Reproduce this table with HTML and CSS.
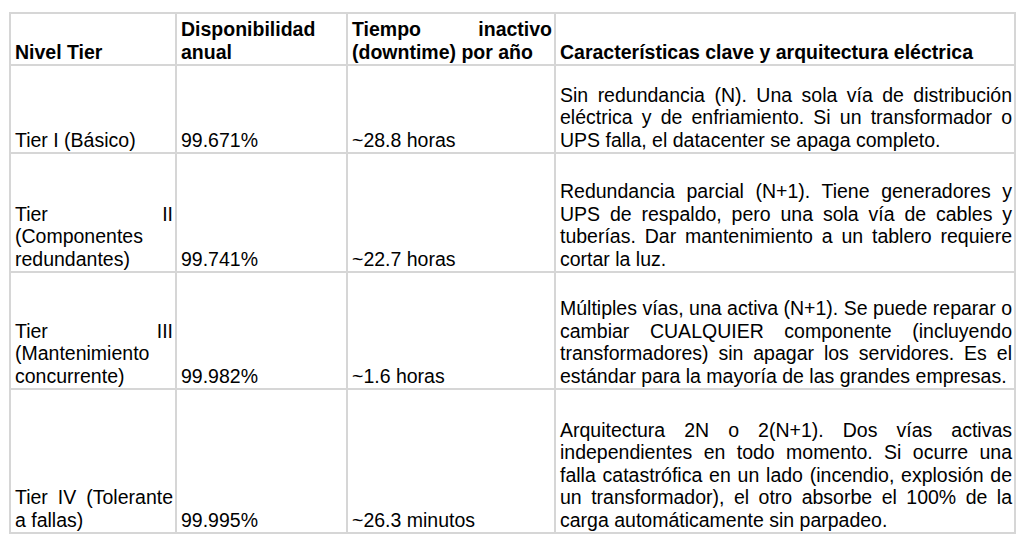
FILE: index.html
```html
<!DOCTYPE html>
<html lang="es">
<head>
<meta charset="utf-8">
<title>Niveles Tier</title>
<link rel="stylesheet" href="styles.css">
</head>
<body>
<table class="tiers">
  <colgroup>
    <col class="c1"><col class="c2"><col class="c3"><col class="c4">
  </colgroup>
  <thead>
    <tr class="r-head">
      <th>Nivel Tier</th>
      <th>Disponibilidad anual</th>
      <th>Tiempo inactivo (downtime) por año</th>
      <th>Características clave y arquitectura eléctrica</th>
    </tr>
  </thead>
  <tbody>
    <tr class="r1">
      <td>Tier I (Básico)</td>
      <td>99.671%</td>
      <td>~28.8 horas</td>
      <td>Sin redundancia (N). Una sola vía de distribución eléctrica y de enfriamiento. Si un transformador o UPS falla, el datacenter se apaga completo.</td>
    </tr>
    <tr class="r2">
      <td>Tier II (Componentes redundantes)</td>
      <td>99.741%</td>
      <td>~22.7 horas</td>
      <td>Redundancia parcial (N+1). Tiene generadores y UPS de respaldo, pero una sola vía de cables y tuberías. Dar mantenimiento a un tablero requiere cortar la luz.</td>
    </tr>
    <tr class="r3">
      <td>Tier III (Mantenimiento concurrente)</td>
      <td>99.982%</td>
      <td>~1.6 horas</td>
      <td>Múltiples vías, una activa (N+1). Se puede reparar o cambiar CUALQUIER componente (incluyendo transformadores) sin apagar los servidores. Es el estándar para la mayoría de las grandes empresas.</td>
    </tr>
    <tr class="r4">
      <td>Tier IV (Tolerante a fallas)</td>
      <td>99.995%</td>
      <td>~26.3 minutos</td>
      <td>Arquitectura 2N o 2(N+1). Dos vías activas independientes en todo momento. Si ocurre una falla catastrófica en un lado (incendio, explosión de un transformador), el otro absorbe el 100% de la carga automáticamente sin parpadeo.</td>
    </tr>
  </tbody>
</table>
</body>
</html>
```

FILE: styles.css
```css
html, body {
  margin: 0;
  padding: 0;
  background: #ffffff;
}

body {
  font-family: "Liberation Sans", Arial, sans-serif;
  font-size: 19.5px;
  line-height: 22.4px;
  color: #000000;
}

.tiers {
  border-collapse: collapse;
  table-layout: fixed;
  width: 1005px;
  margin: 12px 0 0 9px;
}

.c1 { width: 166px; }
.c2 { width: 171px; }
.c3 { width: 208px; }
.c4 { width: 460px; }

.tiers th,
.tiers td {
  border: 2px solid #d6d6d6;
  padding: 0 2px 1px 4px;
  vertical-align: bottom;
  text-align: justify;
  font-weight: normal;
}

.tiers th {
  font-weight: bold;
}

.r-head { height: 52px; }
.r1 { height: 88px; }
.r2 { height: 119px; }
.r3 { height: 117px; }
.r4 { height: 144px; }
```
